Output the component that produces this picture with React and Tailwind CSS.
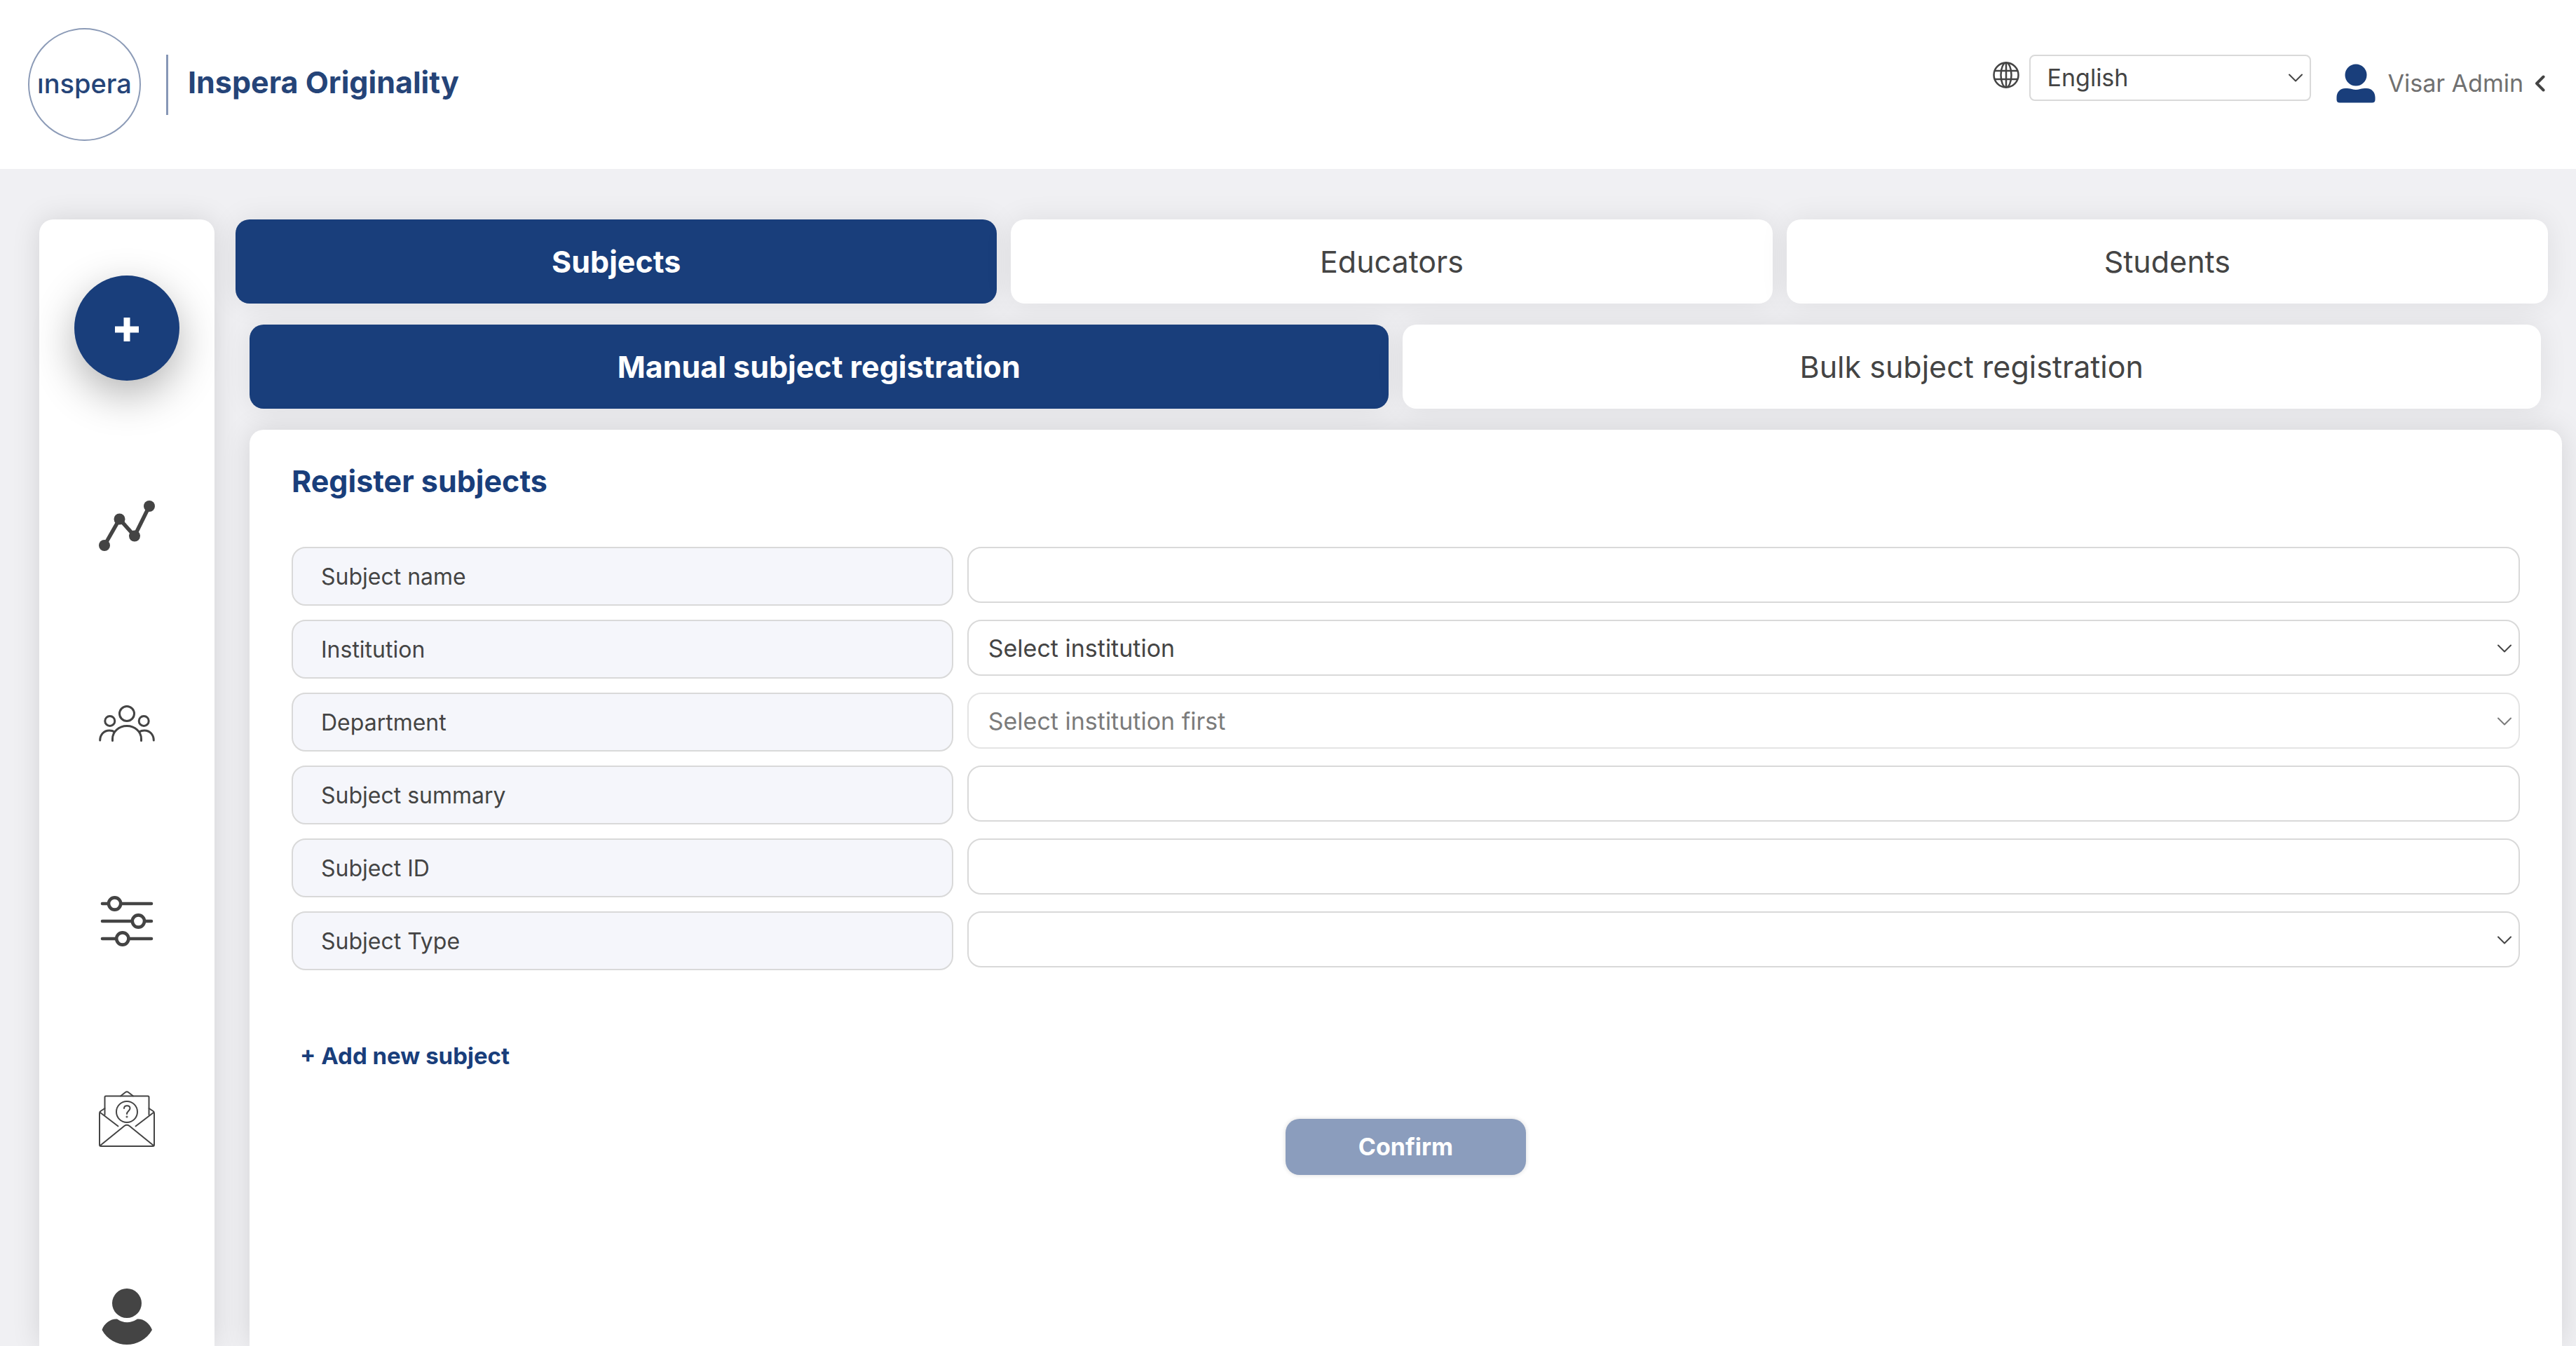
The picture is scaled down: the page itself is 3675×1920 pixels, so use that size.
import React, { useState } from 'react';

const FIELDS = [
  { id: 'name', label: 'Subject name', type: 'text' },
  { id: 'institution', label: 'Institution', type: 'select', placeholder: 'Select institution' },
  { id: 'department', label: 'Department', type: 'select', placeholder: 'Select institution first', disabled: true },
  { id: 'summary', label: 'Subject summary', type: 'text' },
  { id: 'code', label: 'Subject ID', type: 'text' },
  { id: 'type', label: 'Subject Type', type: 'select', placeholder: '' },
];

function ChevronDown({ className }) {
  return (
    <svg className={className} width="20" height="12" viewBox="0 0 20 12" fill="none" stroke="#444" strokeWidth="2" strokeLinecap="round" strokeLinejoin="round" aria-hidden="true">
      <path d="M1 1.5 10 10.5 19 1.5" />
    </svg>
  );
}

function AnalyticsIcon() {
  return (
    <svg width="80" height="80" viewBox="0 0 80 80" fill="#444" aria-hidden="true">
      <path d="M8 68 29.5 30.5 51 54.5 72 12" fill="none" stroke="#444" strokeWidth="5.5" />
      <circle cx="8" cy="68" r="8" />
      <circle cx="29.5" cy="30.5" r="8" />
      <circle cx="51" cy="54.5" r="8" />
      <circle cx="72" cy="12" r="8" />
    </svg>
  );
}

function PeopleIcon() {
  return (
    <svg width="80" height="80" viewBox="0 0 80 80" fill="none" stroke="#444" strokeWidth="3" strokeLinecap="round" aria-hidden="true">
      <circle cx="40" cy="26" r="10.5" />
      <circle cx="15.8" cy="36.4" r="7" />
      <circle cx="64.2" cy="36.4" r="7" />
      <path d="M19.5 64.5V62a20.500 18.500 0 0 1 41 0v2.500" />
      <path d="M1.700 64c0-8 5.500-14 13.300-14 3 0 5.500.700 7.300 2" />
      <path d="M78.300 64c0-8-5.500-14-13.300-14-3 0-5.500.700-7.300 2" />
    </svg>
  );
}

function SlidersIcon() {
  return (
    <svg width="80" height="80" viewBox="0 0 80 80" fill="#fff" stroke="#444" strokeWidth="4.6" strokeLinecap="round" aria-hidden="true">
      <path d="M5 15h70M5 40h70M5 65h70" />
      <circle cx="22.6" cy="15" r="8.6" />
      <circle cx="56.4" cy="40" r="8.6" />
      <circle cx="33.8" cy="65" r="8.6" />
    </svg>
  );
}

function SupportMailIcon() {
  return (
    <svg width="80" height="80" viewBox="0 0 80 80" fill="none" stroke="#444" strokeWidth="2" strokeLinecap="round" strokeLinejoin="round" aria-hidden="true">
      <path d="M31 7.5 38 2q2-1.500 4 0l7 5.500" />
      <path d="M8.500 34V9q0-1.500 1.500-1.500h60q1.500 0 1.500 1.500v25" />
      <path d="M8.500 25 2.500 29q-1.500 1-1.500 3v45q0 2 2 2h74q2 0 2-2V32q0-2-1.500-3l-6-4" />
      <path d="M2 31 27.5 50.5M78 31 52.500 50.500" />
      <path d="M2 78 36.500 50q3.500-2.500 7 0L78 78" />
      <circle cx="40" cy="30" r="15" />
      <path d="M36 25c0-5 8.500-5 8.500 0 0 3.500-4.500 4-4.500 8" />
      <circle cx="40" cy="37" r="0.5" />
    </svg>
  );
}

function ProfileIcon() {
  return (
    <svg width="80" height="80" viewBox="0 0 80 80" fill="#444" aria-hidden="true">
      <circle cx="40" cy="21" r="21" />
      <path d="M26 43.5Q40 53 55 43.5C64 43 72 49 76 59 68 73 54 80 40 80S12 73 4.500 59C8 49 17 43 26 43.500Z" />
    </svg>
  );
}

function GlobeIcon() {
  return (
    <svg width="38" height="38" viewBox="0 0 38 38" fill="none" stroke="#444" strokeWidth="2.5" aria-hidden="true">
      <circle cx="19" cy="19" r="17.5" />
      <ellipse cx="19" cy="19" rx="7.5" ry="17.5" />
      <path d="M19 1.5v35M3 13h32M3 25h32" />
    </svg>
  );
}

function UserIcon() {
  return (
    <svg width="56" height="56" viewBox="0 0 56 56" fill="#193e7b" aria-hidden="true">
      <circle cx="28" cy="16" r="15.5" />
      <path d="M13 35c4 0 6 0 9 1q6 2 12 0c3-1 5-1 9-1 8 0 12.500 6 12.500 13v3q0 4.500-4.500 4.500H5Q.5 55.500.5 51v-3C.5 41 5 35 13 35Z" />
    </svg>
  );
}

const NAV = [
  { label: 'Analytics', Icon: AnalyticsIcon },
  { label: 'Users', Icon: PeopleIcon },
  { label: 'Settings', Icon: SlidersIcon },
  { label: 'Support', Icon: SupportMailIcon },
  { label: 'Profile', Icon: ProfileIcon },
];

function Header() {
  return (
    <header className="flex h-[241px] items-center justify-between bg-white pr-11 pl-10">
      <a href="#home" className="flex items-center text-[#254478]">
        <span className="flex size-[161px] items-center justify-center rounded-full border-2 border-[#8c9bb7] pb-1 text-[38px] leading-none font-medium">
          ınspera
        </span>
        <span className="ml-9 h-[86px] w-[3px] bg-[#8797b6]" />
        <span className="ml-7 pb-2 text-[43px] leading-[50px] font-bold">Inspera Originality</span>
      </a>

      <div className="flex items-center pb-1">
        <div className="flex items-center gap-[14px] pb-4">
          <label htmlFor="language" aria-label="Language" className="pb-2">
            <GlobeIcon />
          </label>
          <div className="relative">
            <select id="language" className="block h-[66px] w-[402px] appearance-none rounded-lg border-2 border-[#d9d9d9] bg-white pl-6 text-[34px] leading-10 text-[#444]">
              <option>English</option>
            </select>
            <ChevronDown className="pointer-events-none absolute top-[27px] right-3" />
          </div>
        </div>
        <button type="button" className="ml-9 flex items-center text-[34px] leading-10 text-[#707070]">
          <UserIcon />
          <span className="ml-[18px]">Visar Admin</span>
          <svg className="ml-4" width="15" height="24" viewBox="0 0 15 24" fill="none" stroke="#444" strokeWidth="4" strokeLinecap="round" strokeLinejoin="round" aria-hidden="true">
            <path d="M12.5 2.5 3 12l9.500 9.500" />
          </svg>
        </button>
      </div>
    </header>
  );
}

function Sidebar() {
  return (
    <aside className="flex w-[250px] shrink-0 flex-col items-center rounded-t-[20px] bg-white pt-20 shadow-[0_0_40px_rgba(0,0,0,0.12)]">
      <button type="button" aria-label="Add" className="flex size-[150px] items-center justify-center rounded-full bg-[#193e7b] shadow-[0_20px_60px_rgba(0,0,0,0.3)]">
        <svg width="34" height="34" viewBox="0 0 34 34" className="mt-1" fill="none" stroke="#fff" strokeWidth="9" aria-hidden="true">
          <path d="M17 0v34M0 17h34" />
        </svg>
      </button>
      <nav className="mt-[167px] flex flex-col gap-[202px]">
        {NAV.map(({ label, Icon }) => (
          <a key={label} href={`#${label.toLowerCase()}`} aria-label={label}>
            <Icon />
          </a>
        ))}
      </nav>
    </aside>
  );
}

function Tabs({ items, active, onChange }) {
  return (
    <div role="tablist" className="flex gap-5">
      {items.map((item) => (
        <button
          key={item}
          type="button"
          role="tab"
          aria-selected={item === active}
          onClick={() => onChange(item)}
          className={`h-[120px] flex-1 rounded-[20px] text-[43px] leading-[50px] shadow-[0_0_40px_rgba(0,0,0,0.08)] ${
            item === active ? 'bg-[#193e7b] font-bold text-white' : 'bg-white text-[#444]'
          }`}
        >
          {item}
        </button>
      ))}
    </div>
  );
}

function Field({ id, label, type, placeholder, disabled }) {
  return (
    <div className="flex items-start gap-5">
      <label htmlFor={id} className="flex h-[84px] w-[calc(30%-10px)] items-center rounded-[20px] border-2 border-[#d9d9d9] bg-[#f5f6fb] pt-[2px] pl-10 text-[32px] leading-10 text-[#444]">
        {label}
      </label>
      {type === 'text' ? (
        <input id={id} type="text" className="h-20 min-w-0 flex-1 rounded-[20px] border-2 border-[#d9d9d9] bg-white px-7 text-[34px] leading-10 text-[#444]" />
      ) : (
        <div className={`relative min-w-0 flex-1 ${disabled ? 'opacity-70' : ''}`}>
          <select id={id} disabled={disabled} className="block h-20 w-full appearance-none rounded-[20px] border-2 border-[#d9d9d9] bg-white px-7 pt-[2px] text-[34px] leading-10 text-[#444] opacity-100">
            <option>{placeholder}</option>
          </select>
          <ChevronDown className="pointer-events-none absolute top-[35px] right-3" />
        </div>
      )}
    </div>
  );
}

export default function App() {
  const [section, setSection] = useState('Subjects');
  const [mode, setMode] = useState('Manual subject registration');

  return (
    <div className="flex min-h-screen flex-col bg-[#f0f0f3] font-['Inter',sans-serif]">
      <Header />
      <div className="flex flex-1 gap-[30px] pt-[72px] pr-5 pl-14">
        <Sidebar />
        <main className="flex min-w-0 flex-1 flex-col gap-[30px]">
          <div className="pr-5">
            <Tabs items={['Subjects', 'Educators', 'Students']} active={section} onChange={setSection} />
          </div>
          <div className="pr-[30px] pl-5">
            <Tabs items={['Manual subject registration', 'Bulk subject registration']} active={mode} onChange={setMode} />
          </div>

          {/* Registration form */}
          <section className="ml-5 flex-1 rounded-t-[20px] bg-white px-[60px] pt-12 shadow-[0_0_40px_rgba(0,0,0,0.12)]">
            <h1 className="text-[43px] leading-[50px] font-bold text-[#193e7b]">Register subjects</h1>
            <form className="mt-[69px] flex flex-col gap-5" onSubmit={(e) => e.preventDefault()}>
              {FIELDS.map((field) => (
                <Field key={field.id} {...field} />
              ))}
              <button type="button" className="mt-[82px] ml-3 self-start text-[33px] leading-10 font-bold text-[#193e7b]">
                + Add new subject
              </button>
              <button type="submit" disabled className="mt-[50px] h-20 w-[343px] self-center rounded-[20px] bg-[#8b9dbd] text-[34px] leading-10 font-bold text-white shadow-[0_0_6px_rgba(0,0,0,0.15)]">
                Confirm
              </button>
            </form>
          </section>
        </main>
      </div>
    </div>
  );
}
